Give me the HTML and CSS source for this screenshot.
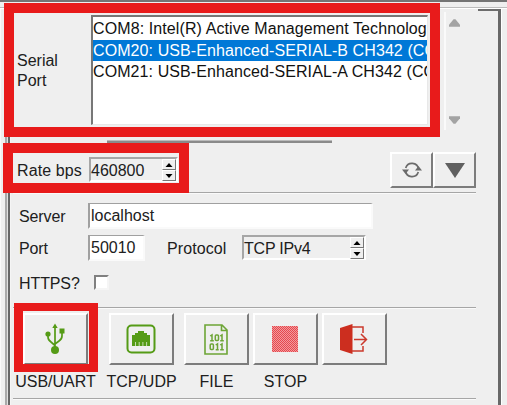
FILE: index.html
```html
<!DOCTYPE html>
<html lang="en">
<head>
<meta charset="utf-8">
<title>Connection</title>
<link rel="stylesheet" href="styles.css">
</head>
<body>
<div class="window">
  <div class="gutter"></div>
  <main class="panel">
    <section class="serial">
      <div class="label serial-label">Serial<br>Port</div>
      <div class="listbox">
        <div class="option o1">COM8: Intel(R) Active Management Technolog</div>
        <div class="option o2 selected">COM20: USB-Enhanced-SERIAL-B CH342 (CO</div>
        <div class="option o2">COM21: USB-Enhanced-SERIAL-A CH342 (CO</div>
      </div>
      <div class="scroll">
        <svg width="11" height="8" viewBox="0 0 12 8"><path d="M5 0h2l5 6v2H0V6z" fill="#a3a3a3"/></svg>
        <svg width="11" height="8" viewBox="0 0 12 8"><path d="M0 0h12v2L7 8H5L0 2z" fill="#a3a3a3"/></svg>
      </div>
    </section>
    <div class="hscroll"></div>
    <section class="rate">
      <span class="label rate-label">Rate bps</span>
      <div class="spin rate-spin"><span>460800</span>
        <div class="steps"><i><svg width="8" height="4"><path d="M4 0L7.5 4H.5z"/></svg></i><i><svg width="8" height="4"><path d="M.5 0h7L4 4z"/></svg></i></div>
      </div>
      <div class="button small refresh"><svg width="20" height="18" viewBox="0 0 20 18" fill="none" stroke="#6b6b6b" stroke-width="1.7"><path d="M3.700 7A6.600 6.600 0 0 1 16.500 8M16.300 11A6.600 6.600 0 0 1 3.500 10"/><path d="M13 9.500h7L16.500 5zM0 8.500h7L3.500 13z" fill="#6b6b6b" stroke="none"/></svg></div>
      <div class="button small"><svg width="20" height="15" viewBox="0 0 20 15"><path d="M0 0h20L10 15z" fill="#606060"/></svg></div>
    </section>
    <hr>
    <section class="form">
      <div class="row"><span class="label">Server</span><div class="field wide">localhost</div></div>
      <div class="row"><span class="label">Port</span><div class="field short">50010</div><span class="proto">Protocol</span>
        <div class="spin proto-spin"><span>TCP IPv4</span>
          <div class="steps"><i><svg width="8" height="4"><path d="M4 0L7.500 4H.5z"/></svg></i><i><svg width="8" height="4"><path d="M.5 0h7L4 4z"/></svg></i></div>
        </div>
      </div>
      <div class="row https"><span class="label">HTTPS?</span><div class="check"></div></div>
    </section>
    <hr>
    <section class="tools">
      <div class="tool t1"><div class="button"><svg width="30" height="32" viewBox="0 0 30 32" fill="none" stroke="#559b16" stroke-width="1.700"><path d="M15 3v25M8 11v3q0 3 3 5l4 3.500M22 8v5q0 3-3 5l-4 3"/><path d="M12.300 5L15 .5 17.700 5zM19.500 5.500h5v5h-5z" fill="#559b16" stroke="none"/><circle cx="8" cy="11" r="2.600" fill="#559b16" stroke="none"/><circle cx="15" cy="27" r="4" fill="#559b16" stroke="none"/></svg></div><span>USB/UART</span></div>
      <div class="tool t2"><div class="button"><svg width="30" height="30" viewBox="0 0 30 30"><rect x="1.500" y="1.500" width="27" height="27" rx="4" fill="none" stroke="#559b16" stroke-width="2"/><path d="M6 22V11h3V9h3V7h6v2h3v2h3v11z" fill="#559b16"/><path d="M9.500 18v4M13.200 18v4M16.900 18v4M20.600 18v4" stroke="#c5dcb0" stroke-width="1"/></svg></div><span>TCP/UDP</span></div>
      <div class="tool t3"><div class="button"><svg width="24" height="31" viewBox="0 0 24 31" fill="none" stroke="#6da536" stroke-width="1.600"><path d="M1 1h17l5 5v24H1zM17.500 1v5.500H23"/><g stroke-width="1.500"><path d="M6.200 12l1.800-1.200v6M6.200 16.800h3.600M16.200 12l1.800-1.200v6M16.200 16.800h3.600M16.200 21l1.800-1.200v6M16.200 25.800h3.600"/><path d="M11.700 21l1.800-1.200v6M11.700 25.800h3"/><rect x="11.300" y="11" width="3.200" height="5.600" rx="1"/><rect x="6.200" y="20" width="3.200" height="5.600" rx="1"/></g></svg></div><span>FILE</span></div>
      <div class="tool t4"><div class="button"><svg width="26" height="26" shape-rendering="crispEdges"><defs><pattern id="dots" width="2" height="2" patternUnits="userSpaceOnUse"><rect width="2" height="2" fill="#f39a9d"/><rect width="1" height="1" fill="#e5484e"/><rect x="1" y="1" width="1" height="1" fill="#e5484e"/></pattern></defs><rect width="26" height="26" fill="url(#dots)"/></svg></div><span>STOP</span></div>
      <div class="tool t5"><div class="button"><svg width="30" height="30" viewBox="0 0 30 30"><path d="M1 4L13.500 0v30L1 26z" fill="#cc2e1f"/><path d="M13 3h11v6M13 27h11v-5M15 15.500h12M22 10l5.500 5.500L22 21" fill="none" stroke="#cc3a2d" stroke-width="1.500"/></svg></div></div>
    </section>
    <hr>
  </main>
  <div class="edge"></div>
  <div class="mark m1"></div>
  <div class="mark m2"></div>
  <div class="mark m3"></div>
</div>
</body>
</html>
```
FILE: styles.css
```css
* { box-sizing: border-box; }
body { margin: 0; background: #efefef; color: #202020; font: 16px/20px "Liberation Sans", Arial, sans-serif; overflow: hidden; }
svg { display: block; flex: none; }
.window { position: relative; width: 507px; height: 405px; border-top: 2px solid #747474; display: flex; box-shadow: inset 0 5px #efefef, inset 0 6px #bcbcbc, inset 0 7px #fff; overflow: hidden; }
.gutter { width: 13px; margin-top: 7px; border-left: 1px solid #fafafa; background: linear-gradient(90deg, #efefef 4px, #a9a9a9 4px 6px, #e0e0e0 6px 7px, #666 7px 9px, #f5f5f5 9px 10px, #efefef 10px); }
.panel { width: 465px; height: 403px; display: flex; flex-direction: column; }
.edge { width: 23px; margin-top: 7px; height: 396px; border-top: 2px solid #6d6d6d; border-right: 3px solid #686868; box-shadow: 1px 0 #fff; }
.serial { display: flex; height: 125px; padding: 13px 0 2px; }
.serial-label { width: 78px; padding: 36px 0 0 4px; }
.listbox { width: 337px; height: 110px; background: #fff; border: 2px solid #777; border-right: 1px solid #e8e8e8; border-bottom: 1px solid #e8e8e8; padding: 1px 0; overflow: hidden; color: #111; }
.option { height: 21.5px; line-height: 21px; white-space: nowrap; overflow: hidden; }
.selected { background: #0078d7; color: #fff; }
.o1 { letter-spacing: 0.1px; }
.o2 { letter-spacing: 0.09px; }
.scroll { width: 17px; height: 118px; margin: -3px 0 0 16px; border-left: 2px solid #fafafa; padding: 7px 0 6px 3px; display: flex; flex-direction: column; justify-content: space-between; }
.hscroll { width: 225px; height: 3px; margin: 13px 0 0 94px; background: #8a8a8a; border-top: 1px solid #bbb; }
.rate { display: flex; height: 49px; padding: 9px 2px 0 3px; }
.rate-label { width: 73px; padding: 9px 0 0 1px; white-space: nowrap; letter-spacing: 0.1px; }
.spin { display: flex; justify-content: space-between; border: 2px solid #a6a6a6; border-right-color: #fff; border-bottom-color: #fff; white-space: nowrap; height: 25px; }
.rate-spin { width: 89px; margin-top: 5px; line-height: 23px; }
.steps { width: 14px; height: 22px; display: flex; flex-direction: column; }
.steps i { height: 11px; display: flex; align-items: center; justify-content: center; border: 1px solid #fff; border-right-color: #777; border-bottom-color: #777; }
.button { width: 65px; height: 52px; display: flex; align-items: center; justify-content: center; border: 2px solid #fff; border-right: 2px solid #7c7c7c; border-bottom: 2px solid #7c7c7c; }
.small { width: 43px; height: 36px; }
.refresh { margin-left: auto; }
hr { width: 463px; height: 2px; margin: 0; border: 0; background: #a6a6a6; border-bottom: 1px solid #fafafa; flex: none; }
.form { height: 113px; padding: 9px 0 0 6px; }
.row { display: flex; height: 32px; align-items: flex-start; }
.row .label { width: 69px; padding-top: 4px; letter-spacing: -0.1px; }
.field { height: 26px; background: #fff; border: 2px solid #a0a0a0; border-top-width: 1px; border-right-color: #fafafa; border-bottom-color: #fafafa; line-height: 24px; padding-left: 1px; }
.wide { width: 285px; }
.short { width: 57px; }
.proto { width: 75px; margin-left: 22px; padding-top: 4px; letter-spacing: 0.1px; }
.proto-spin { width: 124px; line-height: 23px; letter-spacing: -0.2px; }
.https .label { padding-top: 7px; }
.check { width: 15px; height: 15px; margin: 8px 0 0 6px; background: #fff; border: 2px solid #808080; border-right-color: #f5f5f5; border-bottom-color: #f5f5f5; }
.tools { display: flex; height: 89px; padding-top: 4px; }
.tool { display: flex; flex-direction: column; align-items: center; width: 65px; white-space: nowrap; }
.tool .button { padding-right: 2px; }
.tool span { margin-top: 7px; }
.t1 { margin-left: 10px; }
.t2 { margin-left: 21px; }
.t3 { margin-left: 10px; }
.t4, .t5 { margin-left: 4px; }
.mark { position: absolute; border: 10px solid #e81b1b; }
.m1 { left: 4px; top: 1px; width: 436px; height: 134px; }
.m2 { left: 3px; top: 141px; width: 186px; height: 50px; }
.m3 { left: 14px; top: 301px; width: 84px; height: 69px; border-width: 8px 9px; }
```
